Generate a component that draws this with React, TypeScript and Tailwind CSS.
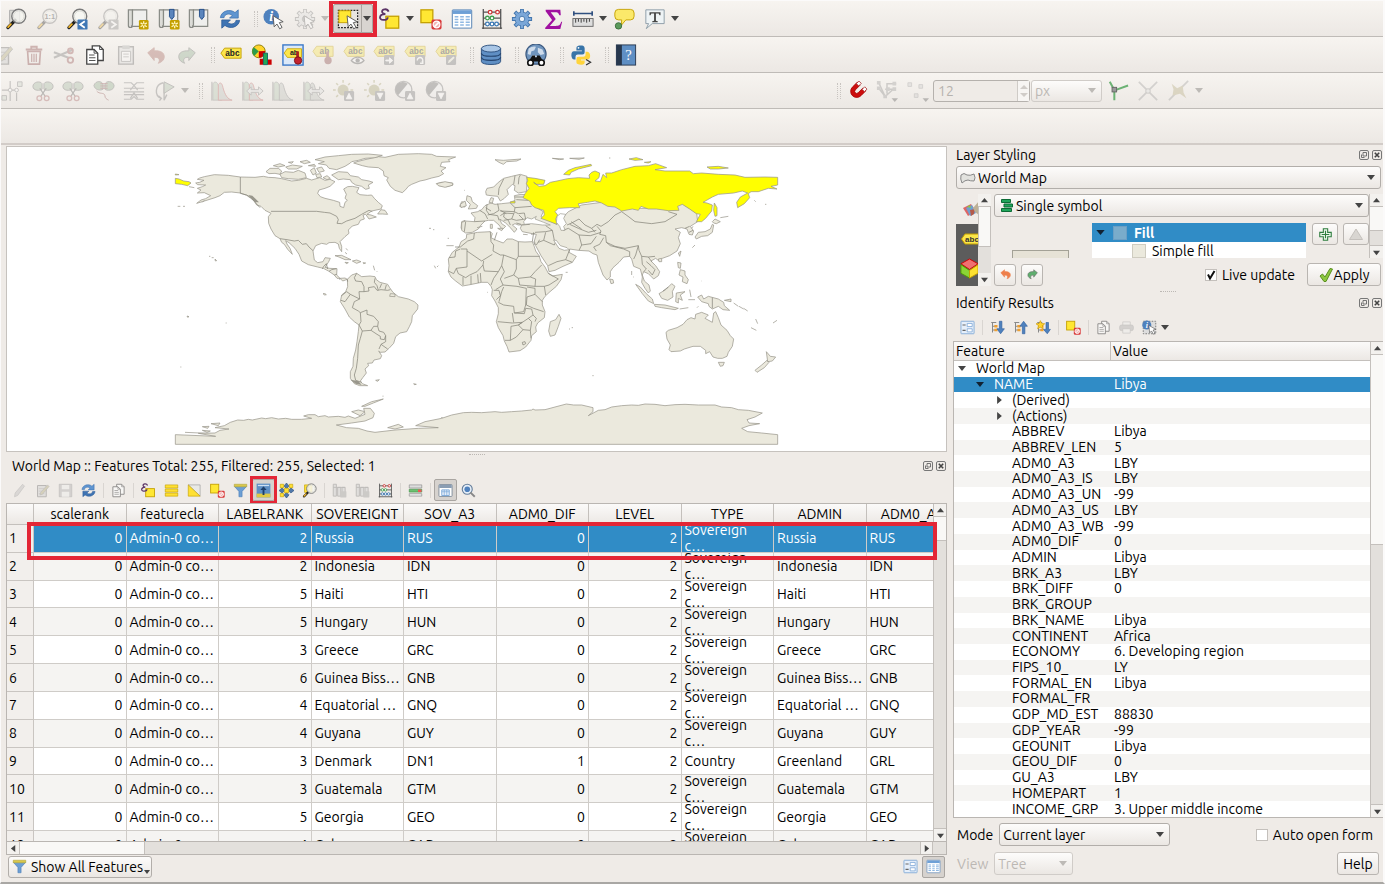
import React from "react";

type Kids = { children?: React.ReactNode };

/* ---------- icon building blocks ---------- */

function Svg({ small, children }: { small?: boolean } & Kids) {
  return (
    <svg viewBox="0 0 24 24" aria-hidden="true" className={small ? "block h-[15px] w-[15px] shrink-0" : "block h-[22px] w-[22px] shrink-0"}>
      {children}
    </svg>
  );
}

const Lens = ({ fill = "#f7f7f3" }: { fill?: string }) => (
  <>
    <path d="M11 13.5 3.2 21.4" stroke="#222" strokeWidth="3.6" strokeLinecap="round" />
    <path d="M6.4 17.6 3.4 20.8" stroke="#f0b429" strokeWidth="2" strokeLinecap="round" />
    <circle cx="15" cy="9" r="7.6" fill={fill} stroke="#7a7a7a" strokeWidth="1.5" />
    <circle cx="15" cy="9" r="5.8" fill="none" stroke="#d8d8d2" />
  </>
);
const StarBadge = () => (
  <>
    <rect x="13" y="13" width="10.5" height="10.5" rx="1.5" fill="#c4a000" />
    <path d="M18.2 14.4v7.8M14.8 16.2l6.8 4.2M21.6 16.2l-6.8 4.2" stroke="#fff6c0" strokeWidth="1.4" />
    <circle cx="18.2" cy="18.3" r="1.2" fill="#c4a000" />
  </>
);
const Scroll = () => (
  <>
    <path d="M1.500 2H6v17a2.200 2.200 0 0 1-4.500 0Z" fill="#dcdcd8" stroke="#888a85" strokeWidth="1.300" />
    <path d="M6 2h15.500v18H4.500q1.500-.5 1.500-2Z" fill="#efefed" stroke="#888a85" strokeWidth="1.300" />
  </>
);
const Ribbon = () => <path d="M12.500 1.500h5v8L15 12.500l-2.500-3Z" fill="#5b86bd" stroke="#204a87" />;
const Refresh = () => (
  <>
    <path d="M1.500 10.500C2.500 3 12 .5 17.500 5L21 2v9h-9.500l3-3C11 5.500 6 6.500 5.500 10.500Z" fill="#5f95d0" stroke="#3b6fae" strokeWidth=".8" />
    <path d="M22.500 13.500c-1 7.500-10.500 10-16 5.500L3 22v-9h9.500l-3 3c3.500 2.500 8.500 1.500 9-2.500Z" fill="#3f74b3" stroke="#285896" strokeWidth=".8" />
  </>
);
const Arrow = () => <path d="M11 8.500 22 15l-4.200 1 3 5.200-2.600 1.500-3-5.200-3 3Z" fill="#fff" stroke="#555" />;
const Deny = () => (
  <>
    <rect x="12.500" y="12.500" width="11" height="11" rx="2" fill="#d93a3a" />
    <circle cx="18" cy="18" r="3.700" fill="#f3b5b5" stroke="#fff" strokeWidth="1.300" />
    <path d="m15.600 20.600 4.900-4.900" stroke="#fff" strokeWidth="1.600" />
  </>
);
const Tag = ({ t = "abc" }: { t?: string }) => (
  <>
    <path d="M1 8 5 2.500h18v11H5Z" fill="#fbe64a" stroke="#c4a000" strokeLinejoin="round" />
    <text x="13.500" y="11" fontSize="9" fontWeight="700" textAnchor="middle" fill="#222" fontFamily="Liberation Sans, sans-serif">{t}</text>
  </>
);
const GreyBadge = ({ d }: { d: string }) => (
  <>
    <rect x="12" y="12" width="11" height="11" rx="1.500" fill="#77787a" />
    <path d={d} fill="#fff" stroke="#fff" />
  </>
);
const Scissors = () => (
  <>
    <path d="M1 7C1 2 9 .5 11 4v6c-2 2-10 2-10-3ZM13 4c2-3.500 10-2 10 3s-8 5-10 3Z" fill="#a3b8a0" stroke="#666" />
    <path d="m8.500 9 6 9M15.500 9l-6 9" stroke="#555" strokeWidth="1.400" />
    <circle cx="8" cy="20" r="2.600" fill="none" stroke="#a66" strokeWidth="1.400" />
    <circle cx="16" cy="20" r="2.600" fill="none" stroke="#a66" strokeWidth="1.400" />
  </>
);
const Histo = ({ red = false, arrows = false }: { red?: boolean; arrows?: boolean }) => (
  <>
    <path d="M1 22.500V2" stroke="#555" />
    <path d="M2 22V4c2-3 5-2 6 2l4 16Z" fill="#b3c6b0" stroke="#777" strokeWidth=".8" />
    <path d="M8 22V5c2-3 4-2 5 3 2 8 5 13 10 14Z" fill="#bcc0ba" stroke={red ? "#b55" : "#777"} />
    {arrows && <path d="M10 10.500h8V7.500l5 4.500-5 4.500v-3h-8v3l-5-4.500 5-4.500Z" fill="#ddd" stroke="#777" />}
  </>
);
const Sun = () => (
  <>
    <circle cx="11" cy="11" r="6" fill="#a8a372" />
    <path d="M11 0v3M0 11h3M3.500 3.500l2 2M18.500 3.500l-2 2M3.500 18.500l2-2M19 11h3" stroke="#a8a372" strokeWidth="1.600" />
  </>
);
const Half = () => (
  <>
    <circle cx="10.500" cy="10.500" r="9" fill="#eee" stroke="#777" strokeWidth="1.500" />
    <path d="M4.500 16.500A8 8 0 0 1 15 4Z" fill="#666" />
  </>
);
const UpB = () => <GreyBadge d="m17.500 14.500 3 6h-6Z" />;
const DownB = () => <GreyBadge d="m17.500 20.500 3-6h-6Z" />;
const Undo = ({ c }: { c: string }) => <path d="M3 9.500 10 4v3.500c7-.5 11 2 11 6.500 0 3.500-3 6-6.500 7 2-2.500 2-7-4.500-6.500V18Z" fill={c} stroke={c} strokeLinejoin="round" />;
const Redo = ({ c }: { c: string }) => <path d="M21 9.500 14 4v3.500C7 7 3 9.500 3 14c0 3.500 3 6 6.500 7-2-2.500-2-7 4.500-6.500V18Z" fill={c} stroke="#666" strokeLinejoin="round" />;
const Pages = () => (
  <>
    <path d="M9 2h8l4 4v12H9Z" fill="#fff" stroke="#444" strokeWidth="1.400" />
    <path d="M3 6h8l4 4v12H3Z" fill="#fff" stroke="#444" strokeWidth="1.400" />
    <path d="M11 6v4h4M5.500 12h6M5.500 15h7M5.500 18h7M17 2v4h4" fill="none" stroke="#444" />
  </>
);
const Table = () => (
  <>
    <rect x="1.500" y="2" width="21" height="20" rx="1" fill="#fff" stroke="#7a9cc2" strokeWidth="1.400" />
    <rect x="2" y="2.500" width="20" height="4" fill="#6ea0d6" />
    <path d="M4 9.500h4M10 9.500h4M16 9.500h4.500M4 12.500h4M10 12.500h4M16 12.500h4.500M4 15.500h4M10 15.500h4M16 15.500h4.500M4 18.500h4M10 18.500h4M16 18.500h4.500" stroke="#8fb8e2" strokeWidth="1.700" />
  </>
);
const Form = () => (
  <>
    <rect x="1.500" y="2" width="21" height="20" rx="1" fill="#e6effa" stroke="#7fa8d6" strokeWidth="1.400" />
    <path d="M4 8h5M4 16.500h5" stroke="#666" strokeWidth="1.800" />
    <path d="M11.500 5.500h8v5h-8ZM11.500 14h8v5h-8Z" fill="#fff" stroke="#7fa8d6" strokeWidth="1.300" />
  </>
);
const Abacus = () => (
  <>
    <path d="M2.500 1v22M21.500 1v22M2.500 4.500h19M2.500 11h19M2.500 17.500h19M1 22h22" stroke="#555" strokeWidth="1.400" fill="none" />
    <g fill="#fff" strokeWidth="1.400">
      <g stroke="#cc3333"><circle cx="10" cy="4.500" r="2" /><circle cx="18" cy="4.500" r="2" /></g>
      <g stroke="#3f9e4d"><circle cx="7" cy="11" r="2" /><circle cx="12" cy="11" r="2" /></g>
      <g stroke="#3a78b5"><circle cx="7" cy="17.500" r="2" /><circle cx="12" cy="17.500" r="2" /><circle cx="17" cy="17.500" r="2" /></g>
    </g>
  </>
);
const Funnel = () => (
  <>
    <path d="M2 5h20l-7.500 8.500V22h-5v-8.500Z" fill="#6d9fd4" stroke="#4c7fb8" />
    <path d="M2 2h20v4H2Z" fill="#d9c94a" stroke="#b5a642" />
  </>
);
const Tree = () => (
  <>
    <path d="M2 4h8M4 4v16M4 10h7M4 16h7" stroke="#888" strokeWidth="1.600" fill="none" />
    <path d="M7 8h5v4H7ZM7 14h5v4H7Z" fill="#f0a030" />
  </>
);
const Gear = ({ c = "#7ba7d8", s = "#4476ad" }: { c?: string; s?: string }) => (
  <>
    <path d="M12 1v22M1 12h22M4.200 4.200l15.600 15.600M19.800 4.200 4.200 19.800" stroke={s} strokeWidth="4.200" />
    <circle cx="12" cy="12" r="7.600" fill={c} stroke={s} />
    <path d="M12 2v20M2 12h20M5 5l14 14M19 5 5 19" stroke={c} strokeWidth="2.400" />
    <circle cx="12" cy="12" r="3" fill="#eef3f8" stroke={s} />
  </>
);
const InfoDot = () => (
  <>
    <circle cx="9" cy="9.500" r="8.500" fill="#4f81bd" />
    <text x="9" y="14.500" fontSize="15" fontWeight="700" fontStyle="italic" textAnchor="middle" fill="#fff" fontFamily="Liberation Serif, serif">i</text>
  </>
);

const icons: Record<string, React.ReactNode> = {
  zoomFull: (<><path d="M5 2.500h11V16H5Z" fill="#dadad4" stroke="#aaa" /><Lens fill="#f5f5f0cc" /></>),
  zoomNative: (<><Lens /><text x="15" y="12" fontSize="8" fontWeight="700" textAnchor="middle" fill="#444" fontFamily="Liberation Sans, sans-serif">1:1</text></>),
  zoomLast: (<><Lens /><rect x="12.500" y="12.500" width="11" height="11" rx="1" fill="#3f77b5" /><path d="m20.500 14.500-5 3.500 5 3.500" stroke="#fff" strokeWidth="2" fill="none" /></>),
  zoomNext: (<><Lens /><rect x="12.500" y="12.500" width="11" height="11" rx="1" fill="#888" /><path d="m15.500 14.500 5 3.500-5 3.500" stroke="#fff" strokeWidth="2" fill="none" /></>),
  newMap: (<><Scroll /><StarBadge /></>),
  newMark: (<><Scroll /><Ribbon /><StarBadge /></>),
  marks: (<><Scroll /><Ribbon /></>),
  refresh: <Refresh />,
  identify: (<><InfoDot /><Arrow /></>),
  action: (<><Gear c="#ddd" s="#777" /><path d="m10 8.500 6 3.500-6 3.500Z" fill="#777" /><Arrow /></>),
  select: (<><path d="M1.500 2.500h21v19h-21Z" fill="#e8e6e0" stroke="#222" strokeDasharray="2 1.300" strokeWidth="1.300" /><rect x="2" y="3" width="13" height="13" fill="#ffe733" stroke="#c4a000" /><Arrow /></>),
  selExpr: (<><rect x="7.500" y="9" width="14" height="13" fill="#ffe733" stroke="#c4a000" strokeWidth="1.400" /><path d="M10.500 4C9 0 2.500 1 3.500 4.500 4 6.500 6 6.500 7 6.500-.5 6.500-.5 13.500 5 13c3 0 4.500-1.500 4.500-3" fill="none" stroke="#5c3566" strokeWidth="2" /></>),
  deselect: (<><rect x="1" y="2" width="13" height="14" fill="#ffe733" stroke="#c4a000" strokeWidth="1.400" /><Deny /></>),
  table: <Table />,
  abacus: <Abacus />,
  gear: <Gear />,
  sigma: <path d="M4 2h16l.5 6h-1.500C18 5 17 4.500 14 4.500H9.500L15 12l-6.500 7.500H15c3.500 0 4.500-.5 6-4.500h1L20 23H3.500v-1.500L11 13 4 3.500Z" fill="#a010a0" />,
  ruler: (<><path d="M2 6h20M2 3.500v5M22 3.500v5" stroke="#2f4f7f" strokeWidth="1.800" /><rect x="1" y="11.500" width="22" height="8.500" fill="#ddd" stroke="#666" /><path d="M4 12v4M7 12v3M10 12v4M13 12v3M16 12v4M19 12v3" stroke="#333" /></>),
  tip: (<><path d="M6 1.500h13q4 0 4 4v3.500q0 4-4 4h-5l-5 6 .5-6H6q-4 0-4-4V5.500q0-4 4-4Z" fill="#fbe96a" stroke="#c4a000" /><circle cx="6" cy="19.500" r="3.500" fill="#5c9a5c" stroke="#3b6e3b" /></>),
  textNote: (<><path d="M2 2h20v15H9l-6.500 5.500L5 17H2Z" fill="#eef3f5" stroke="#8a9aa5" /><path d="M6 4.500h12v3.500h-1l-1-2h-3v8l2 .5v1H9v-1l2-.5v-8H8l-1 2H6Z" fill="#444" /></>),
  editPad: (<><path d="M4 4h14v18H4Z" fill="#ccc" stroke="#666" strokeWidth="1.500" /><path d="M6 9h9M6 13h9M6 17h9" stroke="#888" /><path d="m20 3 2.500 2.500L12 18l-4 1 1-4Z" fill="#b0a878" stroke="#777" /></>),
  trash: (<><path d="M3 6h18M9 5.500V3h6v2.500" stroke="#844" strokeWidth="2" fill="none" /><path d="M5 8h14l-1 14H6Z" fill="none" stroke="#844" strokeWidth="1.800" /><path d="M9.500 10.500v9M12 10.500v9M14.500 10.500v9" stroke="#844" strokeWidth="1.300" /></>),
  cut: (<><path d="m1 9 16 6M1 15 22 6" stroke="#777" strokeWidth="2.200" /><circle cx="19" cy="17.500" r="3" fill="none" stroke="#955" strokeWidth="2" /><circle cx="19" cy="7.500" r="2.600" fill="none" stroke="#955" strokeWidth="2" /></>),
  copy: <Pages />,
  paste: (<><path d="M4 3h16v19H4Z" fill="#ddd" stroke="#666" strokeWidth="1.500" /><path d="M8 1.500h8v4H8Z" fill="#aaa" /><path d="M7 8h10v11H7Z" fill="#fff" stroke="#777" /><path d="M9 11h6M9 14h6" stroke="#888" /></>),
  undo: <Undo c="#a4625a" />,
  redo: <Redo c="#8fae8f" />,
  label: <g transform="translate(0 2)"><Tag /></g>,
  diagram: (<><circle cx="8.500" cy="8" r="7" fill="#ffd42a" stroke="#8a7a00" /><path d="M8.500 8 3 3.500A7 7 0 0 0 3.500 13Z" fill="#2c9c4a" /><path d="M8.500 8 15.500 7.500A7 7 0 0 1 8.500 15Z" fill="#c00" /><path d="M9.500 16v6.500h4V16ZM18 17v5.500h4.500V17Z" fill="#c00" /><path d="M13.500 10v12.500H18V10Z" fill="#22aa55" stroke="#166" /></>),
  labelPin: (<><rect x="1" y="1" width="22" height="22" fill="#dce9f8" stroke="#3a78c8" strokeWidth="1.500" /><g transform="translate(1.500 3) scale(.86)"><Tag t="ab" /></g><path d="M17 8v8" stroke="#a22" strokeWidth="3" /><circle cx="17.500" cy="18" r="4" fill="#c4232e" stroke="#7a1218" /></>),
  labelPinOff: (<><Tag t="ab" /><path d="M17 8v8" stroke="#844" strokeWidth="3" /><circle cx="17.500" cy="18" r="4" fill="#844" /></>),
  labelEye: (<><Tag /><path d="M9 18c4-5 10-5 14 0-4 4.500-10 4.500-14 0Z" fill="#fff" stroke="#555" strokeWidth="1.300" /><circle cx="16" cy="18" r="2.400" fill="#555" /></>),
  labelMove: (<><Tag /><GreyBadge d="M14 17.500h4v-2.500l3.500 3-3.500 3v-2.500h-4Z" /></>),
  labelRotate: (<><Tag /><rect x="12" y="12" width="11" height="11" rx="1.500" fill="#77787a" /><path d="M14.500 18a3 3 0 1 1 5 2M20.500 18v3h-3" fill="none" stroke="#fff" strokeWidth="1.500" /></>),
  labelEdit: (<><Tag /><rect x="12" y="12" width="11" height="11" rx="1.500" fill="#77787a" /><path d="m14 21 1-3 5-4.500 1.500 1.500-5 5Z" fill="#eed" /></>),
  db: (<><path d="M1.500 5v14c0 4.500 21 4.500 21 0V5Z" fill="#5f8fc4" stroke="#2c4f7c" /><ellipse cx="12" cy="5" rx="10.500" ry="3.800" fill="#a9c6e6" stroke="#2c4f7c" /><path d="M1.500 10c0 4.500 21 4.500 21 0M1.500 14.500c0 4.500 21 4.500 21 0" fill="none" stroke="#24446e" strokeWidth="1.300" /></>),
  globe: (<><circle cx="12" cy="11" r="11" fill="#6f94bd" stroke="#3d5a80" strokeWidth="1.300" /><path d="M4 5q4-3 8-2l-2 4-3 1-1 4-3-1ZM14 4l5 2 2 5-4 1-3-3ZM8 12l5 1-1 4-3-1Z" fill="#cfdceb" /><path d="M8 12.500h3v2h2v-2h3l4 6.500H4Z" fill="#111" /><circle cx="6" cy="20.500" r="3" fill="#fff" stroke="#111" strokeWidth="1.800" /><circle cx="18" cy="20.500" r="3" fill="#fff" stroke="#111" strokeWidth="1.800" /></>),
  python: (<><path d="M12 1.500c-5 0-5 2-5 3.500V7h6v1H4.500C2 8 1.500 10 1.500 12.500S3 17 4.500 17H6v-3q0-2.500 2.500-2.500h5q2.500 0 2.500-2.500V5c0-3-2-3.500-4-3.500Z" fill="#3874a8" /><circle cx="9.300" cy="4.200" r="1" fill="#fff" /><path d="M17 8.500V11q0 3-2.500 3h-5Q7 14 7 16.500V20c0 2 2 2.500 5 2.500 3.500 0 4-1.500 4-3v-1.500h-4V17h7c2 0 3-2 3-4s-1-4.500-3-4.500Z" fill="#ffd43b" /><path d="m17.500 17 5 3-5 3" fill="none" stroke="#333" strokeWidth="1.300" /></>),
  help: (<><rect x="1.500" y="1" width="21" height="22" fill="#5f8fc4" stroke="#27374d" /><rect x="1.500" y="1" width="6" height="22" fill="#27374d" /><text x="14.800" y="17" fontSize="16" textAnchor="middle" fill="#fff" fontFamily="Liberation Serif, serif">?</text></>),
  adv: (<><path d="M10 1v22M1 11h16M17 14v9" stroke="#777" strokeWidth="1.300" /><path d="M18 2h5v5h-5ZM1 17h5v5H1Z" fill="#cdd6ca" stroke="#777" /><circle cx="10" cy="11" r="2" fill="#fff" stroke="#777" /><circle cx="17" cy="11" r="2" fill="#fff" stroke="#777" /></>),
  split: <Scissors />,
  merge: (<><path d="M1 6c2-6 9-5 10-1v5c-3 2-9 1-10-4ZM13 5c1-5 9-4 10 1 0 6-8 6-10 4Z" fill="#8fae8c" stroke="#666" /><path d="M8 4h8M8 6.500h8M8 9h8M4 12c3 4 8 1 9 5 0 3 2 4 4 5" fill="none" stroke="#844" /></>),
  vertex: (<><path d="M1 3h8l3 3 3-3h8M1 9h22M1 13h22M1 21h8l3-3 3 3h8M8 11l4-5 4 5M8 20l4-6 4 6M1 16h22" fill="none" stroke="#777" strokeWidth="1.200" /></>),
  rotate: (<><path d="M10 3C1 5 0 17 8 20l-2 2.500M8 20l-3-2.500M11 3v19l3-6" fill="none" stroke="#777" strokeWidth="1.500" /><path d="m11 2 11 5.500-11 7Z" fill="#a9bda6" stroke="#666" /></>),
  histoA: <Histo red />,
  histoB: <Histo red arrows />,
  histoC: <Histo />,
  histoD: <Histo arrows />,
  sunUp: (<><Sun /><UpB /></>),
  sunDown: (<><Sun /><DownB /></>),
  halfUp: (<><Half /><UpB /></>),
  halfDown: (<><Half /><DownB /></>),
  magnet: <g transform="rotate(45 12 12) translate(1.500 1.500) scale(.88)"><path d="M4.500 4v8.500a7.500 7.500 0 0 0 15 0V4h-5v8.500a2.500 2.500 0 0 1-5 0V4Z" fill="#cc0d0d" stroke="#a00" /><path d="M5 1.500h4V6H5ZM15 1.500h4V6h-4Z" fill="#fff" stroke="#a33" /></g>,
  snapV: (<><path d="M3 3l7 15L20 9M10 10h9M3 9l7 9M12 15V4h10" fill="none" stroke="#888" strokeWidth="1.600" /><path d="M1 1h4v4H1ZM1 7h4v4H1ZM8 16h4v4H8ZM18 2h4v4h-4ZM18 8h4v4h-4ZM11 8h4v4h-4Z" fill="#999" /><path d="M17 20h7l-3.500 4Z" fill="#555" /></>),
  snapDots: (<><path d="M1 3h4v4H1ZM13 5h4v4h-4ZM8 15h4v4H8Z" fill="#ccc" stroke="#999" /><path d="M17 20h7l-3.500 4Z" fill="#555" /></>),
  topo: (<><path d="M3 2l5 9M9 11l14-5M8 12v10" stroke="#6cb274" strokeWidth="2.200" /><rect x="5.500" y="8" width="5" height="5" fill="#999" stroke="#666" /></>),
  cross: (<><path d="m2 2 20 20M22 2 2 22" stroke="#999" strokeWidth="1.800" /><circle cx="12" cy="12" r="2.500" fill="#ddd" stroke="#888" /></>),
  trace: (<><path d="M22 1 1 22" stroke="#999" strokeWidth="1.800" /><path d="m4 4 6 5 6-3 1 8 3 6-7-5-8 2 1-7Z" fill="#b3a97c" /></>),
  pencil: <path d="m17 2 3 3L9 20l-5 2 1-6Z" fill="#bbb" stroke="#888" />,
  save: (<><path d="M2 2h20v20H2Z" fill="#aaa" stroke="#777" /><path d="M6 3h12v7H6ZM6 14h12v8H6Z" fill="#eee" /></>),
  rows: (<path d="M2 3h20v5H2ZM2 9.500h20v5H2ZM2 16h20v5H2Z" fill="#ffe033" stroke="#c4a000" />),
  invert: (<><path d="M2 3h19v18Z" fill="#e9e9e6" stroke="#999" /><path d="M2 3v18h19Z" fill="#ffe033" stroke="#c4a000" /></>),
  funnel: <Funnel />,
  moveTop: (<><rect x="1" y="1" width="22" height="22" fill="#5f8fc4" /><path d="M1 17h22v6H1Z" fill="#e0ca42" /><path d="m12 5 5 6h-3.500v8h-3v-8H7Z" fill="#1d3f6b" /><path d="M3 4h18" stroke="#cfe0f2" strokeWidth="2" /></>),
  pan: (<><path d="m12 0 4 5-4 4-4-4ZM12 15l4 4-4 5-4-5ZM5 8l4 4-4 4-5-4ZM19 8l5 4-5 4-4-4Z" fill="#4f78ab" stroke="#2c4f7c" /><path d="M8.500 8.500h7v7h-7ZM2 2h5.500v5.500H2ZM16.500 2H22v5.500h-5.500ZM2 16.500h5.500V22H2Z" fill="#ffe033" stroke="#c4a000" /></>),
  zoomSel: (<><path d="M4 3h12v12H4Z" fill="#ffe033" stroke="#c4a000" /><Lens fill="#f5f5f0dd" /></>),
  colNew: (<><path d="M2 2h5v19H2ZM9 7h5v14H9ZM16 7h5v14h-5ZM2 7h19" fill="#ccc" stroke="#777" strokeWidth="1.500" /><rect x="13" y="13" width="10" height="10" rx="1" fill="#999" /></>),
  cond: (<><path d="M2 3h20v5H2Z" fill="#ddd" stroke="#888" /><path d="M2 10h20v4.500H2Z" fill="#6cc070" stroke="#3f8f48" /><path d="M2 17h20v4H2Z" fill="#e9e9e9" stroke="#888" /><path d="M16 10.500h5.500v4H16Z" fill="#e55" /></>),
  dock: (<><rect x="1.500" y="2.500" width="21" height="19" rx="1" fill="#fff" stroke="#7a8896" strokeWidth="1.400" /><path d="M2 3h20v5H2Z" fill="#8a9db3" /><path d="M6 11h12v9H6Z" fill="#e5eef9" stroke="#6ea0d6" strokeWidth="1.300" /><path d="M6 14h12M10 11v9M14 11v9" stroke="#6ea0d6" /></>),
  zoomAct: (<><circle cx="10" cy="10" r="8" fill="#e6eef7" stroke="#667f9c" strokeWidth="1.800" /><circle cx="10" cy="10" r="4.500" fill="#4f81bd" /><path d="m15 15 7 7" stroke="#888" strokeWidth="3" /></>),
  form: <Form />,
  expand: (<><Tree /><path d="M15 2h4v12h4l-6 8-6-8h4Z" fill="#4f81bd" stroke="#2f5f9e" /></>),
  collapse: (<><Tree /><path d="M15 22h4V10h4l-6-8-6 8h4Z" fill="#4f81bd" stroke="#2f5f9e" /></>),
  expandNew: (<><Tree /><path d="M16 4h4v11h3l-5 7-6-7h4Z" fill="#4f81bd" stroke="#2f5f9e" /><path d="m7 1 2 4.500 5 .5-4 3 1.500 5L7 11.500 2.500 14 4 9 0 6l5-.5Z" fill="#ffd42a" stroke="#c90" /></>),
  print: (<><path d="M6 3h12v6H6Z" fill="#eee" stroke="#888" /><rect x="1" y="8" width="22" height="9" rx="3" fill="#aaa" stroke="#888" /><path d="M6 14h12v7H6Z" fill="#eee" stroke="#888" /></>),
  idMode: (<><path d="M2 2h20v20H2Z" fill="#ddd" stroke="#777" strokeDasharray="2.500 2" strokeWidth="1.500" /><g transform="scale(.85)"><InfoDot /></g><Arrow /></>),
};

const Caret = ({ dim = false }: { dim?: boolean }) => (
  <svg viewBox="0 0 8 5" aria-hidden="true" className="block h-[5px] w-2 shrink-0">
    <path d="M0 0h8L4 5Z" fill={dim ? "#bdbab6" : "#444"} />
  </svg>
);

function Tool({ n, off }: { n: string; off?: boolean }) {
  return (
    <button type="button" aria-label={n} disabled={off} className="flex h-8 min-w-0 flex-1 items-center justify-center disabled:opacity-35">
      <Svg>{icons[n]}</Svg>
    </button>
  );
}

function Small({ n, off, on }: { n: string; off?: boolean; on?: boolean }) {
  return (
    <button
      type="button"
      aria-label={n}
      disabled={off}
      className={
        "flex h-[22px] w-[23px] shrink-0 items-center justify-center rounded-[2px] disabled:opacity-40 " +
        (on ? "border border-[#a9a5a1] bg-[#d6d2ce]" : "")
      }
    >
      <Svg small>{icons[n]}</Svg>
    </button>
  );
}

const Grip = () => (
  <span className="flex h-8 w-[14px] shrink-0 items-center justify-end pr-px">
    <span className="h-4 w-1 border-x border-dotted border-[#c8c4c0]" />
  </span>
);
const Sep = () => <span className="mx-[3px] h-[15px] w-px shrink-0 bg-[#d9d5d1]" />;

function MenuCaret({ dim }: { dim?: boolean }) {
  return (
    <button type="button" aria-label="More" className="flex h-8 w-[10px] shrink-0 items-center justify-center">
      <Caret dim={dim} />
    </button>
  );
}

const bar = "flex h-9 shrink-0 items-center overflow-x-clip border-b border-[#bfbbb7] bg-linear-to-b from-[#f7f4f0] to-[#ece8e4]";

function Toolbars() {
  return (
    <header>
      <div className={bar}>
        <div className="flex w-[244px] shrink-0">
          <Tool n="zoomFull" /><Tool n="zoomNative" off /><Tool n="zoomLast" /><Tool n="zoomNext" off />
          <Tool n="newMap" /><Tool n="newMark" /><Tool n="marks" /><Tool n="refresh" />
        </div>
        <Grip />
        <div className="flex w-[61px] shrink-0"><Tool n="identify" /><Tool n="action" off /></div>
        <MenuCaret dim />
        <div className="relative ml-[3px] flex h-[29px] w-10 shrink-0 items-center rounded-[2px] border border-[#a9a5a1] bg-[#d8d4d0]">
          <Tool n="select" />
          <span className="flex h-full items-center border-l border-[#a9a5a1]"><MenuCaret /></span>
          <span className="pointer-events-none absolute -inset-[5px] border-4 border-[#e32636]" />
        </div>
        <div className="ml-[2px] flex w-[30px] shrink-0"><Tool n="selExpr" /></div>
        <MenuCaret />
        <div className="ml-px flex w-[152px] shrink-0">
          <Tool n="deselect" /><Tool n="table" /><Tool n="abacus" /><Tool n="gear" /><Tool n="sigma" />
        </div>
        <div className="flex w-[30px] shrink-0"><Tool n="ruler" /></div>
        <MenuCaret />
        <div className="flex w-[62px] shrink-0"><Tool n="tip" /><Tool n="textNote" /></div>
        <MenuCaret />
      </div>
      <div className={bar}>
        <div className="-ml-[13px] flex w-[214px] shrink-0">
          <Tool n="editPad" off /><Tool n="trash" off /><Tool n="cut" off /><Tool n="copy" /><Tool n="paste" off />
          <Tool n="undo" off /><Tool n="redo" off />
        </div>
        <Grip />
        <div className="flex w-[245px] shrink-0">
          <Tool n="label" /><Tool n="diagram" /><Tool n="labelPin" /><Tool n="labelPinOff" off /><Tool n="labelEye" off />
          <Tool n="labelMove" off /><Tool n="labelRotate" off /><Tool n="labelEdit" off />
        </div>
        {["db", "globe", "python", "help"].map((n) => (
          <div key={n} className="flex w-[45px] shrink-0"><Grip /><Tool n={n} /></div>
        ))}
      </div>
      <div className={bar}>
        <div className="-ml-1 flex w-[183px] shrink-0">
          <Tool n="adv" off /><Tool n="split" off /><Tool n="split" off /><Tool n="merge" off /><Tool n="vertex" off /><Tool n="rotate" off />
        </div>
        <MenuCaret dim />
        <Grip />
        <div className="ml-[3px] flex w-[244px] shrink-0">
          <Tool n="histoA" off /><Tool n="histoB" off /><Tool n="histoC" off /><Tool n="histoD" off />
          <Tool n="sunUp" off /><Tool n="sunDown" off /><Tool n="halfUp" off /><Tool n="halfDown" off />
        </div>
        <div className="ml-[377px] flex shrink-0 items-center">
          <Grip />
          <div className="flex w-[91px]"><Tool n="magnet" /><Tool n="snapV" off /><Tool n="snapDots" off /></div>
          <div className="flex h-[22px] w-[97px] rounded-[3px] border border-[#b5b1ad] bg-[#efebe7] text-[#b6b2ae]">
            <input aria-label="Tolerance" disabled value="12" readOnly className="w-[83px] bg-transparent px-1 outline-none" />
            <span className="flex flex-1 flex-col items-center justify-center gap-1 border-l border-[#cfcbc7] bg-[#f7f5f3]">
              <svg viewBox="0 0 8 4" className="h-1 w-2"><path d="M0 4h8L4 0Z" fill="#d0ccc8" /></svg>
              <svg viewBox="0 0 8 4" className="h-1 w-2"><path d="M0 0h8L4 4Z" fill="#d0ccc8" /></svg>
            </span>
          </div>
          <Combo label="Unit" value="px" disabled box="ml-px h-[22px] w-[71px]" />
          <div className="ml-px flex w-[91px]"><Tool n="topo" /><Tool n="cross" off /><Tool n="trace" off /></div>
          <MenuCaret dim />
        </div>
      </div>
      <div className="h-9 border-b-2 border-[#d2ccc8] bg-linear-to-b from-[#f7f4f0] to-[#ece8e4]" />
    </header>
  );
}

function Combo({ label, value, box, icon, disabled }: { label: string; value: string; box: string; icon?: React.ReactNode; disabled?: boolean }) {
  return (
    <div
      className={
        "flex items-center rounded-[3px] border bg-linear-to-b from-[#fdfcfb] to-[#ebe7e3] pr-[5px] pl-[3px] " +
        (disabled ? "border-[#d0ccc8] text-[#bcb8b4] " : "border-[#b2aeaa] ") + box
      }
    >
      {icon}
      <select aria-label={label} disabled={disabled} className="min-w-0 flex-1 appearance-none bg-transparent outline-none disabled:opacity-100">
        <option>{value}</option>
      </select>
      <Caret dim={disabled} />
    </div>
  );
}

/* ---------- world map ---------- */

const LAND_W = [
  "M226 96 190 91 148 89 118 95 104 99 97 103 117 106 104 112 92 114 98 119 122 120 112 125 97 130 108 135 97 144 118 143 137 152 122 161 108 165 95 175 112 170 150 158 165 152 178 142 200 141 226 144 245 151 256 159 268 168 275 180 288 184 300 196 318 205 310 215 311 235 318 252 330 272 345 281 350 292 358 298 368 313 382 328 375 310 366 297 362 287 372 293 390 310 402 328 410 348 430 359 458 366 475 370 492 379 508 390 516 400 525 400 533 408 547 403 540 399 525 400 515 390 516 371 494 370 480 367 490 352 496 340 480 338 474 350 458 353 448 345 444 318 452 302 470 295 485 298 492 293 510 292 520 297 523 310 530 320 530 304 525 290 540 275 552 265 550 255 562 243 580 238 586 226 598 222 594 210 602 208 612 222 634 216 618 210 606 208 620 198 648 192 652 182 640 172 628 160 620 150 608 151 585 149 575 142 582 128 562 124 548 125 536 132 544 148 540 160 547 166 540 172 536 188 525 184 524 172 505 166 480 160 466 155 458 145 462 135 480 130 495 124 510 110 495 103 480 106 464 98 440 105 425 100 400 106 380 108 350 101 330 98 310 97 295 94 270 97Z",
  "M576 50 600 44 640 35 660 37 700 28 760 26 800 28 815 34 872 36 850 44 855 50 830 52 826 64 843 68 828 78 836 86 822 94 800 99 780 105 765 108 740 118 730 124 722 134 712 143 690 136 676 124 665 105 670 98 657 92 655 78 640 68 610 66 592 62 566 54Z",
  "M450 44 480 36 520 32 560 28 610 27 652 31 630 38 600 40 580 46 560 50 556 54 540 64 515 74 492 70 484 60 460 56 478 50Z",
  "M500 90 520 80 548 82 556 92 580 96 590 104 612 108 624 112 610 120 613 130 602 133 590 124 572 120 560 112 556 104 535 102 520 104Z",
  "M303 80 315 70 340 70 350 78 345 88 330 85 312 86ZM345 88 360 80 385 82 400 76 420 84 424 98 400 103 370 101 350 98ZM325 62 345 56 360 62 340 66ZM362 66 382 60 412 64 395 72 370 72ZM405 50 425 46 436 52 418 56ZM436 76 448 68 454 84 444 90ZM455 70 470 66 478 78 462 82ZM430 62 448 58 452 64ZM474 98 486 92 496 100 486 104ZM370 52 385 50 380 55ZM452 88 466 86 470 96 456 98Z",
  "M648 194 660 196 668 208 652 207 638 207ZM815 116 830 112 862 114 864 120 845 125 822 122ZM510 332 530 331 558 344 540 344 522 336ZM562 348 575 345 588 350 575 355ZM540 352l10 1-6 3ZM594 353l8 1-6 2ZM543 310l5 6M540 322l6 5M625 362l4 14M636 378v2",
  "M547 403 560 390 575 385 590 395 615 393 630 395 634 404 645 412 668 418 674 428 684 442 700 455 730 462 748 470 759 480 758 492 742 512 740 530 733 545 725 560 705 564 692 575 686 595 672 610 660 621 645 622 641 618 650 632 646 641 627 645 622 654 608 655 611 662 600 672 604 684 594 697 586 708 592 716 608 722 584 722 568 716 556 700 556 680 564 664 565 640 572 615 576 590 580 560 582 540 568 530 553 516 540 492 526 470 530 450 542 440 548 425Z",
  "M676 446 690 447 690 455 674 454ZM632 706 643 704 638 709ZM746 716 754 718 748 719ZM474 446h6l4 3-5 1ZM66 513l6 2-4 2ZM182 534h3M46 666h3M132 334h4M140 338h6M150 342l5 5-4 1ZM38 184h8M54 184h6M118 166l-6 6M72 125l16 3M792 250h6M804 254h4M848 280h4M844 302h22M808 362l4 8M816 366l4-4M560 800 580 795 600 800 585 812ZM590 784 620 770 655 762 625 774 600 784ZM668 848 700 838 715 846 690 852ZM112 845 132 844 128 850ZM112 856l24 2-10 4ZM138 836 165 834 160 842ZM60 862l88 4M828 818l6 1M654 752v3",
  "M884 184 890 170 900 172 900 186ZM890 230 900 226 900 258 888 250Z",
];

const BORDERS_W = [
  "M226 96V145L245 150 258 158 270 172 285 188",
  "M318 199H455L478 202 495 204 515 214 520 224 516 235 530 236 545 228 570 220 590 208 612 196 622 200",
  "M345 281 366 284 388 288 400 286 412 298 424 296 432 306 444 317",
  "M472 372 476 364 484 356 488 372M492 379 500 374 514 371M508 390 515 388M525 400 524 404M547 403 548 410",
  "M575 385 568 398 572 408 590 410 597 425 597 440 582 440 584 462 568 470 562 488 580 498 586 503 606 495M597 440 612 438 610 428 628 425 636 436 648 434 668 436 676 434M630 400 628 412 636 422 640 436M650 416 644 430M664 420 660 434M530 452 545 440 556 448 584 462M528 466 540 470 556 448",
  "M586 503 588 530 582 540 592 558 618 556 626 544 638 544 640 530 626 514 606 508 606 495M618 556 636 568 646 574 646 582 658 584 662 572 656 562 642 558 638 544M662 572 662 590 648 598 642 612M648 598 668 612M592 558 586 580 580 600 578 640 574 670 568 690 572 706 590 712",
];

const LAND_E = [
  /* Africa */
  "M95 268 128 262 166 260 172 266 168 278 184 286 205 294 216 282 232 282 250 290 270 291 292 290 298 305 302 318 312 332 318 350 330 366 340 385 352 393 382 388 378 404 364 424 345 440 330 454 322 466 322 480 330 500 328 518 308 534 302 546 304 560 290 572 288 586 272 606 255 617 222 621 216 604 208 588 204 572 190 548 184 530 190 506 190 488 180 468 170 452 172 434 168 424 158 412 140 412 120 416 100 420 82 423 62 408 48 396 40 380 42 362 40 342 52 322 72 306 78 290 94 280Z",
  "M346 530 362 524 372 508 378 520 370 544 360 570 346 574 341 558Z",
  /* Europe and Asia */
  "M80 232 92 228 118 230 120 218 108 204 128 200 140 194 150 182 168 174 180 178 200 176 228 173 240 166 238 152 258 148 280 150 300 185 325 200 318 215 365 238 400 200 440 180 500 172 600 190 700 190 740 175 785 205 788 230 766 244 776 258 772 270 762 268 756 252 740 248 720 252 736 262 730 278 736 296 726 318 704 332 682 340 672 348 662 340 648 348 662 362 674 380 670 392 656 402 648 394 640 386 626 380 622 390 628 408 642 420 646 438 640 444 630 430 620 412 622 396 616 372 606 368 596 364 590 342 584 334 566 336 552 352 534 368 526 380 526 396 516 405 504 390 490 352 486 330 474 326 462 318 430 316 404 312 402 322 424 334 412 352 384 364 360 376 342 380 338 362 318 332 302 302 298 288 304 268 292 266 262 260 256 250 260 240 284 238 250 240 240 236 232 240 246 252 238 262 226 248 212 234 194 222 200 236 212 244 202 254 192 240 176 226 160 226 150 228 138 240 130 252 112 262 92 264 80 256Z",
  /* Scandinavia, British Isles */
  "M152 140 156 130 176 126 190 112 206 100 230 94 256 88 276 94 276 118 274 140 250 144 238 136 240 122 232 118 216 134 220 148 208 160 196 168 188 154 168 152 154 150ZM96 152 108 156 112 170 128 182 124 190 100 192 106 178 94 166ZM76 178 90 168 94 182 78 188ZM162 172 168 158 176 160 172 174ZM4 116 30 110 54 115 52 121 30 127 10 122ZM188 250l16 0-4 7ZM166 238h6v12h-6Z",
  "M180 44 205 46 258 42 245 48 215 50 205 58 192 52ZM352 40l34 2-12 2ZM404 40l44-1-16 4ZM522 39h4M88 136h2M126 248l16-4M264 268l14 1M288 268l12-2",
  /* South-east Asia and Japan */
  "M602 418 616 426 634 446 652 462 656 476 640 468 622 446ZM658 478 690 480 730 490 720 494 680 488 660 484ZM672 446 692 434 710 416 720 424 712 440 714 456 698 466 680 460ZM724 444 750 440 736 450 742 466 730 460 730 474 722 470ZM736 374 750 378 750 390 760 404 756 416 742 410 744 396 732 390ZM728 352 738 354 736 370 730 368ZM730 324 738 318 734 334ZM670 342 680 340 680 350 672 350ZM524 402 534 404 536 414 528 416ZM770 250 774 244M764 434l4 22M734 492l26 -4M760 464l20 0M786 488 790 484",
  "M780 276 790 262 810 260 826 252 832 238 836 240 832 262 818 272 800 274 784 282ZM832 230 840 222 856 230 844 236 836 234ZM856 218l24-4M772 308l8-8",
  "M788 456 800 450 806 462 820 454 850 462 866 472 868 482 884 496 864 494 850 484 832 492 822 484 820 476 800 470ZM868 466 888 462 888 470ZM896 474 910 484M912 484l14 8M926 490l12 8M962 522l6 14M948 548l16 8M1014 534l12-8M990 178h4M958 166l4 4",
  /* Oceania */
  "M693 562 700 556 726 548 744 538 756 524 768 518 780 522 782 508 800 502 820 510 810 520 832 532 836 504 842 500 850 518 858 540 876 556 886 572 896 582 892 604 880 622 876 634 862 640 848 640 834 636 824 620 812 626 812 616 796 604 774 604 748 612 736 618 708 620 702 614 706 600 696 582ZM850 652 868 652 864 662 856 664Z",
  "M994 620 1006 634 1022 636 1012 648 998 650ZM996 646 1002 652 988 668 966 682 960 676 980 660ZM472 692h4M410 548h4M402 552h3M392 382h6M156 442h2M590 378v12M594 396h2M800 408h1",
];

const RUSSIA = [
  "M275 97 300 100 330 106 326 118 304 118 296 112 312 124 330 122 346 112 366 108 398 101 430 98 464 100 462 90 470 82 480 78 494 84 492 98 480 108 496 110 504 88 515 98 512 84 530 84 560 74 600 64 640 62 662 56 695 68 660 74 690 78 764 78 775 86 800 84 850 88 900 90 930 97 990 96 1028 97 1028 120 1008 124 1026 132 1000 130 970 140 948 140 940 146 944 158 928 176 908 188 905 172 916 156 938 144 922 138 896 144 850 148 832 156 804 172 816 174 832 180 830 198 812 220 800 230 784 230 796 208 784 206 764 192 742 178 728 184 732 196 700 197 664 192 640 192 618 184 610 196 592 192 560 198 540 186 518 184 500 174 480 168 458 172 430 176 434 188 404 188 370 190 360 200 368 210 362 222 366 238 345 230 318 220 328 210 326 196 300 188 290 180 284 168 264 158 270 146 282 130 274 116 278 106Z",
  "M386 88 400 76 420 68 468 58 470 62 430 72 408 82 404 90ZM582 42 604 38 624 44 600 46ZM628 52 648 50 640 54ZM816 66 850 64 880 69 850 72 826 72ZM838 174 846 188 846 212 840 214 836 196ZM226 170 240 168 240 174 226 174Z",
  "M-779 100-768 102-754 108-738 110-732 114-742 122-760 118-779 116ZM-779 87-768 89-779 90Z",
];

const SEAS = [
  "M366 214 376 206 392 208 386 220 394 236 386 244 390 256 378 256 374 244 364 232Z",
  "M266 230 276 218 290 222 304 214 300 222 326 232 346 240 322 240 290 236 268 238Z",
  "M356 286 364 286 376 302 396 308 402 314 388 316 372 310Z",
];

const BORDERS_E = [
  "M166 260 168 290 176 300 174 318 196 330 206 330 244 344 250 334V290M250 334H314M118 264 116 282 98 288 76 306M76 306H60M78 312H96V366L64 370M96 318 140 348 172 328M64 370 56 386 40 378M64 370 70 386 92 398 104 390 126 380 144 360 146 348M144 360 148 378 190 380 200 362 206 330M84 396 84 420M108 392 108 418M128 388 130 414M136 384 138 412M190 380 176 400 168 420M200 362 208 380 196 402 204 420 182 434M208 400 236 390 244 372 244 344M236 390 250 400 286 396 300 380 320 360M250 400 254 420 300 424 302 402 286 396M300 424 328 424 342 420 370 402 340 385M328 424 332 450M204 420 246 424 274 430 272 480 266 500 238 504 236 484 206 480 190 472M192 470 200 440 206 426M176 436H192L196 452 184 464M276 426 300 430 300 448 276 456M300 448 322 470M276 456 274 480 296 490 326 500M188 530 232 534 262 532 250 540 228 544 226 586 210 586M232 504 236 532M238 504 268 506 272 490 290 492 294 510 280 520 262 532 250 540 264 554 286 556 290 530 280 520M226 586 244 576 264 554M286 556 288 580M294 510 304 520 300 530M262 592l8-2 2 6-8 4ZM296 290 300 300M42 338 60 336 62 318 76 312",
  "M560 200 540 210 520 230 498 244 486 238 470 250 450 240 432 222 410 234 396 240M560 200 582 216 600 230 650 236 690 230 726 208 700 200M486 244 498 258 494 268 512 272 514 292 540 304 570 310 610 302 612 316 620 334 640 336 660 334M514 292 526 302 566 312 584 320 584 334M498 262 466 272 432 270 440 300 432 316M440 300 468 296 484 274M484 318 476 306 494 298 506 278M432 270 400 250 384 256M352 256 358 286M352 256 332 242M300 262 332 260 352 256M310 292 326 286 332 262M326 286 358 300 362 290M304 300 314 284M404 314 392 344 366 350 340 362M392 344 412 352M610 302 602 330 596 342M620 334 622 358 634 372 626 380M634 350 648 362 660 374 652 390 640 376M640 336 650 350M764 244 750 250M774 256 762 262M404 238 430 250 460 262 484 256M470 250 480 262M408 230 440 252",
  "M92 230 88 260M118 230 150 228M134 196 150 206 158 222M156 178 154 196 162 208 188 212 192 226M188 176 192 196 176 206M226 174 240 188 238 200 196 198M238 200 250 206 268 204 272 222 244 226 230 222M290 184 240 188M280 166 244 164M284 156 240 156M208 204 206 216 220 226 226 240M196 212 208 204 236 206M206 226 230 222M196 196 214 206M238 202 230 222M258 238 244 234M252 210 264 222M240 92 236 118M206 102 192 130 190 150M256 90 252 98 250 118M152 188 168 198M176 206 158 210",
  "M832 458V490M700 426 684 438M296 262 292 290M186 262 178 286",
];

function WorldMap() {
  const land = { fill: "#ebe9dd", stroke: "#99978c", strokeWidth: 2.2, strokeLinejoin: "round" as const };
  return (
    <svg viewBox="-474 6 2817 912" role="img" aria-label="World map" className="block h-full w-full">
      <g {...land}>
        {LAND_W.map((d) => <path key={d} d={d} />)}
        <path d="M31 898V869L152 874 100 865 150 864 165 856 192 852 150 848 178 842 196 832 218 825 236 826 250 823 262 825 290 819 302 821 320 818 340 822 362 820 380 823 410 823 440 820 416 813 430 809 450 809 460 815 480 812 490 816 520 814 540 817 550 813 570 820 600 808 596 790 616 790 628 805 624 818 600 828 560 834 514 840 545 848 580 850 606 858 630 862 690 855 760 850 820 848 752 842 780 830 830 820 860 810 895 803 920 802 950 803 990 800 1010 802 1040 800 1070 798 1100 795 1104 792 1110 795 1140 794 1170 786 1204 777 1226 780 1250 780 1284 788 1284 800 1270 812 1300 796 1320 794 1340 786 1370 782 1400 780 1420 781 1440 777 1470 778 1500 782 1530 779 1560 778 1600 780 1650 780 1670 786 1700 788 1720 794 1750 796 1792 804 1770 816 1746 824 1752 834 1784 836 1752 842 1730 850 1748 860 1790 864 1838 869V898Z" />
      </g>
      <g fill="none" stroke="#858378" strokeWidth="2.200" strokeLinejoin="round">
        {BORDERS_W.map((d) => <path key={d} d={d} />)}
      </g>
      <path d="M250 150 262 152 282 172 270 172ZM556 704 580 708 590 720 572 716Z" fill="#99978c" />
      <g transform="translate(810 0)">
        <g {...land}>{LAND_E.map((d) => <path key={d} d={d} />)}</g>
        <g fill="none" stroke="#858378" strokeWidth="2.200" strokeLinejoin="round">
          {BORDERS_E.map((d) => <path key={d} d={d} />)}
        </g>
        <g fill="#ffff00" stroke="#99978c" strokeWidth="2.200" strokeLinejoin="round">
          {RUSSIA.map((d) => <path key={d} d={d} />)}
        </g>
        <g fill="#fff" stroke="#99978c" strokeWidth="2">
          {SEAS.map((d) => <path key={d} d={d} />)}
        </g>
      </g>
    </svg>
  );
}

/* ---------- attribute table ---------- */

const HEAD = ["scalerank", "featurecla", "LABELRANK", "SOVEREIGNT", "SOV_A3", "ADM0_DIF", "LEVEL", "TYPE", "ADMIN", "ADM0_A3"];
const S = "Sovereign c…";
const ROWS: [string, string, string, string, string, string, string][] = [
  ["2", "Russia", "RUS", "0", S, "Russia", "RUS"],
  ["2", "Indonesia", "IDN", "0", S, "Indonesia", "IDN"],
  ["5", "Haiti", "HTI", "0", S, "Haiti", "HTI"],
  ["5", "Hungary", "HUN", "0", S, "Hungary", "HUN"],
  ["3", "Greece", "GRC", "0", S, "Greece", "GRC"],
  ["6", "Guinea Biss…", "GNB", "0", S, "Guinea Biss…", "GNB"],
  ["4", "Equatorial …", "GNQ", "0", S, "Equatorial …", "GNQ"],
  ["4", "Guyana", "GUY", "0", S, "Guyana", "GUY"],
  ["3", "Denmark", "DN1", "1", "Country", "Greenland", "GRL"],
  ["3", "Guatemala", "GTM", "0", S, "Guatemala", "GTM"],
  ["5", "Georgia", "GEO", "0", S, "Georgia", "GEO"],
  ["4", "Gabon", "GAB", "0", S, "Gabon", "GAB"],
];

const tri = { up: "M0 6h8L4 1Z", down: "M0 2h8L4 7Z", left: "M6 0v8L1 4Z", right: "M2 0v8l5-4Z" };
function ScrollBtn({ dir, box }: { dir: keyof typeof tri; box: string }) {
  return (
    <button type="button" aria-label={"Scroll " + dir} className={"flex shrink-0 items-center justify-center border-[#c4c0bc] bg-[#f3f1ee] " + box}>
      <svg viewBox="0 0 8 8" className="block h-[7px] w-[7px]"><path d={tri[dir]} fill="#444" /></svg>
    </button>
  );
}

const NUM = new Set([0, 2, 5, 6]);

function AttributeTable() {
  return (
    <div className="relative flex min-h-0 flex-1 flex-col border border-[#bab6b2]">
      <div className="flex min-h-0 flex-1">
        <div className="min-w-0 flex-1 overflow-hidden bg-white">
          <table className="h-[355px] w-[952px] table-fixed border-separate border-spacing-0">
            <colgroup><col className="w-[27px]" /></colgroup>
            <thead className="bg-linear-to-b from-[#fbfaf9] to-[#ebe7e3]">
              <tr className="h-[21px]">
                <th className="border-r border-b border-[#c4c0bc] p-0" />
                {HEAD.map((h) => (
                  <th key={h} scope="col" className="h-[21px] border-r border-b border-[#c4c0bc] p-0 leading-5 font-normal">{h}</th>
                ))}
              </tr>
            </thead>
            <tbody>
              {ROWS.map((r, i) => {
                const cells = ["0", "Admin-0 co…", r[0], r[1], r[2], r[3], "2", r[4], r[5], r[6]];
                return (
                  <tr key={r[1]} className={i === 0 ? "bg-[#308cc6] text-white" : i % 2 ? "bg-[#f5f4f2]" : "bg-white"}>
                    <th scope="row" className="border-r border-b border-[#c9c5c1] bg-[#f2efec] p-0 pl-[2px] text-left font-normal text-black">{i + 1}</th>
                    {cells.map((c, j) => (
                      <td key={j} className="border-r border-b border-[#cfccc8] p-0">
                        <div className={"flex h-[26px] items-center overflow-hidden px-[3px] leading-4 " + (NUM.has(j) ? "justify-end" : "")}>
                          {j === 7 && c === S ? <span>Sovereign<br />c…</span> : <span className="whitespace-nowrap">{c}</span>}
                        </div>
                      </td>
                    ))}
                  </tr>
                );
              })}
            </tbody>
          </table>
        </div>
        <div className="flex w-[13px] flex-col border-l border-[#c4c0bc] bg-[#e3e0dc]">
          <ScrollBtn dir="up" box="h-[13px] border-b" />
          <div className="h-6 border-b border-[#c4c0bc] bg-[#f9f8f6]" />
          <ScrollBtn dir="down" box="mt-auto h-[13px] border-t" />
        </div>
      </div>
      <div className="flex h-[13px] border-t border-[#bab6b2] bg-[#e3e0dc]">
        <ScrollBtn dir="left" box="w-[13px] border-r" />
        <div className="w-[125px] border-r border-[#c4c0bc] bg-[#f9f8f6]" />
        <ScrollBtn dir="right" box="mr-[13px] ml-auto w-[13px] border-x" />
      </div>
      <span className="pointer-events-none absolute top-[18px] right-[9px] left-5 h-[38px] border-4 border-[#e32636]" />
    </div>
  );
}

function DockTitle({ tight, children }: { tight?: boolean } & Kids) {
  return (
    <div className={"flex shrink-0 items-center " + (tight ? "mb-[2px] h-[19px]" : "h-[22px]")}>
      <h2 className="flex-1">{children}</h2>
      <button type="button" aria-label="Float" className="mr-[3px]">
        <svg viewBox="0 0 10 10" className="block h-[10px] w-[10px]"><rect x=".5" y=".5" width="9" height="9" rx="1.500" fill="none" stroke="#777" /><path d="M4 2.500h3.500V6H4ZM2.500 4.500V7.500H5.500" fill="none" stroke="#666" strokeWidth=".9" /></svg>
      </button>
      <button type="button" aria-label="Close" className="mr-px">
        <svg viewBox="0 0 10 10" className="block h-[10px] w-[10px]"><rect x=".5" y=".5" width="9" height="9" rx="1.500" fill="none" stroke="#777" /><path d="m2.800 2.800 4.400 4.400M7.200 2.800 2.800 7.200" stroke="#444" strokeWidth="1.600" /></svg>
      </button>
    </div>
  );
}

const Dots = () => <div className="mx-auto h-px w-4 shrink-0 border-t border-dotted border-[#bcb8b4]" />;

function LeftColumn() {
  return (
    <div className="flex min-w-0 flex-1 flex-col pl-[5px]">
      <div className="mt-px min-h-0 flex-1 border border-[#c6c2be] bg-white"><WorldMap /></div>
      <div className="flex h-[430px] shrink-0 flex-col">
        <div className="pt-[2px]"><Dots /></div>
        <div className="pl-[6px]"><DockTitle>World Map :: Features Total: 255, Filtered: 255, Selected: 1</DockTitle></div>
        <div className="flex h-[26px] shrink-0 items-center pl-[2px]">
          <Small n="pencil" off /><Small n="editPad" off /><Small n="save" off /><Small n="refresh" />
          <Sep /><span className="opacity-60"><Small n="copy" /></span><Sep />
          <Small n="selExpr" /><Small n="rows" /><Small n="invert" /><Small n="deselect" /><Small n="funnel" />
          <span className="relative">
            <Small n="moveTop" on />
            <span className="pointer-events-none absolute -inset-x-[2px] -inset-y-[3px] border-3 border-[#e32636]" />
          </span>
          <Small n="pan" /><Small n="zoomSel" /><Sep />
          <Small n="colNew" off /><Small n="colNew" off /><Small n="abacus" /><Sep />
          <Small n="cond" /><Sep /><Small n="dock" on /><Small n="zoomAct" />
        </div>
        <AttributeTable />
        <div className="flex h-[27px] shrink-0 items-center pr-[2px] pb-1 pl-[2px]">
          <button type="button" className="flex h-[22px] items-center gap-1 rounded-[3px] border border-[#b2aeaa] bg-linear-to-b from-[#fdfcfb] to-[#ebe7e3] pr-px pl-[3px]">
            <Svg small>{icons.funnel}</Svg>
            <span>Show All Features</span>
            <span className="mt-[10px] -ml-[3px]"><svg viewBox="0 0 6 4" className="block h-1 w-[6px]"><path d="M0 0h6L3 4Z" fill="#444" /></svg></span>
          </button>
          <span className="ml-auto flex"><Small n="form" /><Small n="table" on /></span>
        </div>
      </div>
    </div>
  );
}

/* ---------- right docks ---------- */

const boxBtn = "flex items-center justify-center rounded-[3px] border border-[#b9b5b1] bg-linear-to-b from-[#fdfcfb] to-[#ebe7e3]";

function LayerStyling() {
  return (
    <section className="flex shrink-0 flex-col pl-[3px]">
      <DockTitle tight>Layer Styling</DockTitle>
      <Combo
        label="Layer"
        value="World Map"
        box="mr-[2px] h-[23px]"
        icon={<svg viewBox="0 0 16 12" className="mr-[2px] h-3 w-4"><path d="M1 3q3-3 6 0 3 1 7-1 2 4 0 7-4 0-6-1-3 0-6 3-2-4-1-8Z" fill="#e2e2de" stroke="#888" /></svg>}
      />
      <div className="mt-[5px] flex h-[92px]">
        <nav aria-label="Style pages" className="flex w-[22px] flex-col overflow-hidden">
          <button type="button" aria-label="Symbology" className="flex h-[30px] shrink-0 items-center pl-[6px]">
            <svg viewBox="0 0 18 18" className="h-[18px] w-[18px] shrink-0"><path d="m1 8 8-4 5 7-8 5Z" fill="#d66" /><path d="m4 8 6-3 4 8-6 3Z" fill="#6f9fd0" /><path d="m8 10 5-1-1 5-3 2Z" fill="#b55a4a" /><path d="M11 8 17 1v14l-4-3Z" fill="#bdb095" /><path d="m5 7 3-2 1 3Z" fill="#8c4" /></svg>
          </button>
          <button type="button" aria-label="Labels" className="flex h-[30px] shrink-0 items-center bg-[#5c5c5c] pl-[5px]">
            <svg viewBox="0 0 20 12" className="h-3 w-5 shrink-0"><path d="M.5 6 4 1h18v10H4Z" fill="#fbe64a" stroke="#c4a000" /><text x="11" y="9" fontSize="8" fontWeight="700" textAnchor="middle" fill="#333" fontFamily="Liberation Sans, sans-serif">abc</text></svg>
          </button>
          <button type="button" aria-label="3D view" className="flex min-h-0 flex-1 items-start bg-[#5c5c5c] pt-1 pl-1">
            <svg viewBox="0 0 20 22" className="h-[21px] w-[19px] shrink-0"><path d="m10 1 9 5-9 6-9-6Z" fill="#f07070" stroke="#c00" /><path d="m1 7 9 6v8l-9-5Z" fill="#8bd435" stroke="#4e9a06" /><path d="m19 7-9 6v8l9-5Z" fill="#fce030" stroke="#c4a000" /></svg>
          </button>
        </nav>
        <div className="flex w-[13px] flex-col bg-[#f7f5f2]">
          <ScrollBtn dir="up" box="h-[13px] border-b" />
          <div className="h-10 border-x border-b border-[#c4c0bc] bg-[#f9f8f6]" />
          <div className="flex-1 bg-[#e3e0dc]" />
          <ScrollBtn dir="down" box="h-[13px]" />
        </div>
        <div className="flex min-w-0 flex-1 flex-col pl-[3px]">
          <div className="flex h-16 overflow-hidden">
            <div className="min-w-0 flex-1">
              <Combo
                label="Renderer"
                value="Single symbol"
                box="h-[23px]"
                icon={<svg viewBox="0 0 12 13" className="mr-[3px] ml-[3px] h-[13px] w-3"><path d="M.5.500h9v3h-9ZM3 5h8.500v3H3ZM.5 9.500h10v3h-10Z" fill="#1fa55a" stroke="#0d6b36" /></svg>}
              />
              <div className="mt-[6px] flex">
                <div className="flex w-[98px] pt-[27px] pl-[18px]"><div className="h-10 w-[57px] border border-[#a3a196] bg-[#e6e2d6]" /></div>
                <ul className="min-w-0 flex-1 bg-white">
                  <li className="flex h-[19px] items-center bg-[#308cc6] pl-1 font-bold text-white">
                    <svg viewBox="0 0 10 6" className="mr-2 h-[5px] w-[9px]"><path d="M0 0h10L5 6Z" fill="#123" /></svg>
                    <span className="mr-[7px] h-[14px] w-[14px] border border-[#6c9fc4] bg-[#7aaccb]" />Fill
                  </li>
                  <li className="flex h-[17px] items-center pl-10">
                    <span className="mr-[6px] h-[14px] w-[14px] border border-[#cfccc0] bg-[#ebe9dd]" />Simple fill
                  </li>
                </ul>
                <div className="ml-[6px] grid grid-cols-2 gap-x-[5px] gap-y-1">
                  <button type="button" aria-label="Add symbol layer" className={boxBtn + " h-[22px] w-[26px]"}>
                    <svg viewBox="0 0 12 12" className="h-[13px] w-[13px]"><path d="M4 .7h4V4h3.300v4H8v3.300H4V8H.7V4H4Z" fill="#e8f4e8" stroke="#2f7d3f" /><path d="M6 2.500v7M2.500 6h7" stroke="#2f7d3f" /></svg>
                  </button>
                  <button type="button" aria-label="Move up" disabled className={boxBtn + " h-[22px] w-[26px]"}>
                    <svg viewBox="0 0 14 12" className="h-3 w-[14px]"><path d="M.5 11.500h13L7 1Z" fill="#d8d5d1" stroke="#c4c0bc" /></svg>
                  </button>
                  <button type="button" aria-label="Remove symbol layer" className={boxBtn + " h-[22px] w-[26px]"} />
                  <button type="button" aria-label="Move down" disabled className={boxBtn + " h-[22px] w-[26px]"}>
                    <svg viewBox="0 0 14 12" className="h-3 w-[14px]"><path d="M.5.500h13L7 11Z" fill="#d8d5d1" stroke="#c4c0bc" /></svg>
                  </button>
                </div>
              </div>
            </div>
            <div className="flex w-[14px] flex-col border-l border-[#c4c0bc] bg-[#e3e0dc]">
              <ScrollBtn dir="up" box="h-[13px] border-b" />
              <div className="h-6 border-b border-[#c4c0bc] bg-[#f9f8f6]" />
              <ScrollBtn dir="down" box="mt-auto h-[13px] border-t" />
            </div>
          </div>
          <div className="mt-[5px] flex items-center pr-[2px]">
            <button type="button" aria-label="Undo" className={boxBtn + " h-[22px] w-[22px]"}><Svg small><g transform="translate(2 1) scale(.85)"><Undo c="#ee7f4b" /></g></Svg></button>
            <button type="button" aria-label="Redo" className={boxBtn + " ml-[5px] h-[22px] w-[22px]"}><Svg small><g transform="translate(2 1) scale(.85)"><Redo c="#5fae6e" /></g></Svg></button>
            <label className="ml-auto flex items-center gap-[5px]"><Check checked />Live update</label>
            <button type="button" className={boxBtn + " ml-3 h-[23px] w-[74px] gap-px"}>
              <svg viewBox="0 0 14 14" className="h-[14px] w-[14px]"><path d="M1 8 3.500 6 6 9l5-8.500L13.500 1 7 13.500H5Z" fill="#8cc63f" stroke="#5a8f1f" /></svg>
              Apply
            </button>
          </div>
        </div>
      </div>
    </section>
  );
}

function Check({ checked }: { checked?: boolean }) {
  return (
    <span className="relative flex h-3 w-3">
      <input type="checkbox" defaultChecked={checked} className="peer h-3 w-3 appearance-none border border-[#c4c0bc] bg-white" />
      <svg viewBox="0 0 12 12" className="pointer-events-none absolute inset-0 hidden h-3 w-3 peer-checked:block"><path d="m3 5.500 2 4L9.500 2" fill="none" stroke="#111" strokeWidth="2" /></svg>
    </span>
  );
}

const RESULTS: [string, string][] = [
  ["ABBREV", "Libya"], ["ABBREV_LEN", "5"], ["ADM0_A3", "LBY"], ["ADM0_A3_IS", "LBY"], ["ADM0_A3_UN", "-99"],
  ["ADM0_A3_US", "LBY"], ["ADM0_A3_WB", "-99"], ["ADM0_DIF", "0"], ["ADMIN", "Libya"], ["BRK_A3", "LBY"],
  ["BRK_DIFF", "0"], ["BRK_GROUP", ""], ["BRK_NAME", "Libya"], ["CONTINENT", "Africa"], ["ECONOMY", "6. Developing region"],
  ["FIPS_10_", "LY"], ["FORMAL_EN", "Libya"], ["FORMAL_FR", ""], ["GDP_MD_EST", "88830"], ["GDP_YEAR", "-99"],
  ["GEOUNIT", "Libya"], ["GEOU_DIF", "0"], ["GU_A3", "LBY"], ["HOMEPART", "1"], ["INCOME_GRP", "3. Upper middle income"],
];

const Open = ({ dark }: { dark?: boolean }) => <svg viewBox="0 0 10 6" className="h-[5px] w-2"><path d="M0 0h10L5 6Z" fill={dark ? "#123" : "#444"} /></svg>;
const Closed = () => <svg viewBox="0 0 6 10" className="h-2 w-[5px]"><path d="M0 0v10l6-5Z" fill="#444" /></svg>;

function TreeRow({ name, value, pad, mark, tone }: { name: string; value: string; pad: string; mark?: React.ReactNode; tone: string }) {
  return (
    <tr className={tone}>
      <td className="p-0">
        <div className={"flex items-center leading-[15px] " + pad}>
          <span className="flex w-[18px] shrink-0 items-center">{mark}</span>{name}
        </div>
      </td>
      <td className="p-0 pl-[3px] leading-[15px]">{value}</td>
    </tr>
  );
}

function IdentifyResults() {
  return (
    <section className="flex min-h-0 flex-1 flex-col">
      <div className="pl-[3px]"><DockTitle>Identify Results</DockTitle></div>
      <div className="flex h-[26px] shrink-0 items-center pl-[3px]">
        <Small n="form" /><Sep /><Small n="expand" /><Small n="collapse" /><Small n="expandNew" /><Sep />
        <Small n="deselect" /><Sep /><span className="opacity-60"><Small n="copy" /></span><Small n="print" off /><Small n="idMode" /><Caret />
      </div>
      <div className="mt-px flex min-h-0 flex-1 border-y border-l border-[#bab6b2] bg-white">
        <div className="min-w-0 flex-1">
          <table className="h-full w-full table-fixed border-separate border-spacing-0">
            <colgroup><col className="w-[157px]" /><col /></colgroup>
            <thead>
              <tr className="h-[19px] bg-linear-to-b from-[#fbfaf9] to-[#ebe7e3]">
                <th scope="col" className="h-[19px] border-r border-b border-[#c4c0bc] p-0 pl-[2px] text-left leading-[18px] font-normal">Feature</th>
                <th scope="col" className="h-[19px] border-b border-[#c4c0bc] p-0 pl-[2px] text-left leading-[18px] font-normal">Value</th>
              </tr>
            </thead>
            <tbody>
              <TreeRow name="World Map" value="" pad="pl-1" mark={<Open />} tone="bg-white" />
              <TreeRow name="NAME" value="Libya" pad="pl-[22px]" mark={<Open dark />} tone="bg-[#308cc6] text-white" />
              <TreeRow name="(Derived)" value="" pad="pl-10" mark={<span className="pl-[3px]"><Closed /></span>} tone="bg-white" />
              <TreeRow name="(Actions)" value="" pad="pl-10" mark={<span className="pl-[3px]"><Closed /></span>} tone="bg-[#f5f4f2]" />
              {RESULTS.map(([k, v], i) => (
                <TreeRow key={k} name={k} value={v} pad="pl-10" tone={i % 2 ? "bg-[#f5f4f2]" : "bg-white"} />
              ))}
            </tbody>
          </table>
        </div>
        <div className="flex w-[13px] shrink-0 flex-col border-l border-[#c4c0bc] bg-[#e3e0dc]">
          <ScrollBtn dir="up" box="h-[13px] border-b" />
          <div className="h-[190px] border-b border-[#c4c0bc] bg-[#f9f8f6]" />
          <ScrollBtn dir="down" box="mt-auto h-[13px] border-t" />
        </div>
      </div>
      <div className="mt-[5px] flex h-[23px] shrink-0 items-center pl-1">
        <span>Mode</span>
        <Combo label="Mode" value="Current layer" box="ml-[6px] h-[23px] w-[171px]" />
        <label className="mr-[10px] ml-auto flex items-center gap-[5px]"><Check />Auto open form</label>
      </div>
      <div className="mt-[6px] mb-[7px] flex h-[23px] shrink-0 items-center pl-1">
        <span className="text-[#bcb8b4]">View</span>
        <Combo label="View" value="Tree" disabled box="ml-[6px] h-[23px] w-[79px]" />
        <button type="button" className={boxBtn + " mr-1 ml-auto h-[23px] w-[42px]"}>Help</button>
      </div>
    </section>
  );
}

export default function App() {
  return (
    <div className="flex h-screen flex-col overflow-hidden border-t border-r-2 border-b-2 border-l border-t-[#fbfafa] border-r-[#fbfafa] border-b-[#a9a7a4] border-l-[#fbfafa] bg-[#efebe7] font-['Ubuntu','Noto_Sans',sans-serif] text-sm leading-4 text-black">
      <Toolbars />
      <main className="flex min-h-0 flex-1">
        <LeftColumn />
        <div className="ml-[6px] flex w-[430px] shrink-0 flex-col">
          <LayerStyling />
          <div className="pt-[5px]"><Dots /></div>
          <IdentifyResults />
        </div>
      </main>
    </div>
  );
}
